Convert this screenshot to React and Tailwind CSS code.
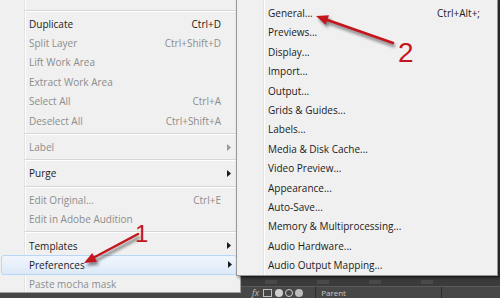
import React from "react";

const font = { fontFamily: '"Open Sans", "Noto Sans", sans-serif' };

const mainItems = [
  { type: "sep" },
  { label: "Duplicate", shortcut: "Ctrl+D" },
  { label: "Split Layer", shortcut: "Ctrl+Shift+D", disabled: true },
  { label: "Lift Work Area", disabled: true },
  { label: "Extract Work Area", disabled: true },
  { label: "Select All", shortcut: "Ctrl+A", disabled: true },
  { label: "Deselect All", shortcut: "Ctrl+Shift+A", disabled: true },
  { type: "sep" },
  { label: "Label", disabled: true, sub: true },
  { type: "sep" },
  { label: "Purge", sub: true },
  { type: "sep" },
  { label: "Edit Original...", shortcut: "Ctrl+E", disabled: true },
  { label: "Edit in Adobe Audition", disabled: true },
  { type: "sep" },
  { label: "Templates", sub: true },
  { label: "Preferences", sub: true, active: true },
  { label: "Paste mocha mask", disabled: true },
];

const prefItems = [
  { label: "General...", shortcut: "Ctrl+Alt+;" },
  { label: "Previews..." },
  { label: "Display..." },
  { label: "Import..." },
  { label: "Output..." },
  { label: "Grids & Guides..." },
  { label: "Labels..." },
  { label: "Media & Disk Cache..." },
  { label: "Video Preview..." },
  { label: "Appearance..." },
  { label: "Auto-Save..." },
  { label: "Memory & Multiprocessing..." },
  { label: "Audio Hardware..." },
  { label: "Audio Output Mapping..." },
];

const SubArrow = ({ disabled }) => (
  <svg width="4" height="7" viewBox="0 0 4 7" className="shrink-0">
    <path d="M0 0 L4 3.5 L0 7 Z" fill={disabled ? "#9a9a9a" : "#1a1a1a"} />
  </svg>
);

const Separator = () => (
  <div className="h-[7px] flex flex-col justify-center ml-[25px] mr-[4px]">
    <div className="h-px bg-[#d7d7d7]" />
    <div className="h-px bg-white" />
  </div>
);

const MenuRow = ({ item, padLeft, padRight }) => {
  const color = item.disabled ? "text-[#8d8d8d]" : "text-[#1b1b1b]";
  return (
    <div
      className={
        "h-[19.4px] flex items-center rounded-[3px] border " +
        (item.active
          ? "ml-[1px] mr-[3px] border-[#b8d6f5] bg-[linear-gradient(to_bottom,#f1f6fd,#dde9f8)]"
          : "border-transparent mx-0")
      }
      style={{ paddingLeft: padLeft, paddingRight: item.active ? padRight - 4 : padRight }}
    >
      <span className={"flex-1 whitespace-nowrap " + color}>{item.label}</span>
      {item.shortcut && <span className={"whitespace-nowrap " + color}>{item.shortcut}</span>}
      <div className="w-[10px] flex justify-end">{item.sub && <SubArrow disabled={item.disabled} />}</div>
    </div>
  );
};

export default function App() {
  return (
    <div className="relative w-[500px] h-[298px] overflow-hidden bg-[#353535] text-[10px] leading-none" style={font}>
      {/* background application panels */}
      <div className="flex flex-col h-full">
        <div className="flex-1 bg-[#3a3a3a]" />
        <div className="h-[10px] bg-[#3b3b3b] border-t border-[#2b2b2b] flex items-center gap-[40px] pl-[265px]">
          <div className="w-[12px] h-[4px] bg-[#4a4a4a]" />
          <div className="w-[12px] h-[4px] bg-[#4a4a4a]" />
          <div className="w-[12px] h-[4px] bg-[#4a4a4a]" />
          <div className="w-[12px] h-[4px] bg-[#4a4a4a]" />
        </div>
        <div className="h-[12px] bg-[#474747] border-t border-[#5a5a5a] flex items-center pl-[252px]">
          <span className="text-[9px] italic text-[#bdbdbd]">fx</span>
          <div className="ml-[4px] w-[9px] h-[8px] border border-[#bdbdbd]" />
          <div className="ml-[3px] w-[8px] h-[8px] rounded-full bg-[#cfcfcf]" />
          <div className="ml-[2px] w-[8px] h-[8px] rounded-full border border-[#cfcfcf]" />
          <div className="ml-[2px] w-[8px] h-[8px] rounded-full bg-[#bdbdbd]" />
          <div className="ml-[12px] w-px h-full bg-[#2c2c2c]" />
          <span className="ml-[5px] text-[8px] text-[#c8c8c8]">Parent</span>
          <div className="ml-auto mr-[58px] w-px h-full bg-[#2c2c2c]" />
        </div>
      </div>

      {/* main context menu */}
      <div className="absolute left-0 top-0 w-[241px] h-[293px] border-r border-b border-[#a0a0a0] bg-[linear-gradient(to_right,#f0f0f0_24px,#e2e3e3_24px,#e2e3e3_25px,#ffffff_25px,#ffffff_26px,#f0f0f0_26px)] pt-[7px]">
        {mainItems.map((item, i) =>
          item.type === "sep" ? (
            <Separator key={i} />
          ) : (
            <MenuRow key={i} item={item} padLeft={item.active ? 27 : 28} padRight={8} />
          )
        )}
      </div>

      {/* Preferences submenu */}
      <div className="absolute left-[236px] top-[-2px] w-[262px] h-[278px] border border-[#979797] shadow-[2px_2px_3px_rgba(0,0,0,0.45)] bg-[linear-gradient(to_right,#f0f0f0_26px,#e2e3e3_26px,#e2e3e3_27px,#ffffff_27px,#ffffff_28px,#f0f0f0_28px)] pt-[4.3px]">
        {prefItems.map((item, i) => (
          <MenuRow key={i} item={item} padLeft={30} padRight={6} />
        ))}
      </div>

      {/* annotation arrows */}
      <svg className="absolute inset-0 pointer-events-none" width="500" height="298" viewBox="0 0 500 298">
        <defs>
          <filter id="sh" x="-20%" y="-20%" width="140%" height="140%">
            <feGaussianBlur stdDeviation="1.5" />
          </filter>
        </defs>
        <g transform="translate(2 3)" filter="url(#sh)" opacity="0.45">
          <line x1="138" y1="234" x2="93" y2="258" stroke="#000" strokeWidth="3" />
          <polygon points="84,263 97,261.7 92.2,252.9" fill="#000" />
          <line x1="393" y1="43" x2="326" y2="19.5" stroke="#000" strokeWidth="3" />
          <polygon points="316,16 329,15.3 325.6,24.7" fill="#000" />
        </g>
        <line x1="138" y1="234" x2="93" y2="258" stroke="#c4161c" strokeWidth="2.5" strokeLinecap="round" />
        <polygon points="84,263 97,261.7 92.2,252.9" fill="#c4161c" />
        <line x1="393" y1="43" x2="326" y2="19.5" stroke="#c4161c" strokeWidth="2.5" strokeLinecap="round" />
        <polygon points="316,16 329,15.3 325.6,24.7" fill="#c4161c" />
        <text x="135" y="242" fill="#c4161c" fontSize="24" fontFamily="Liberation Sans, Arial, sans-serif">1</text>
        <text x="398" y="62" fill="#c4161c" fontSize="28" fontFamily="Liberation Sans, Arial, sans-serif">2</text>
      </svg>
    </div>
  );
}
